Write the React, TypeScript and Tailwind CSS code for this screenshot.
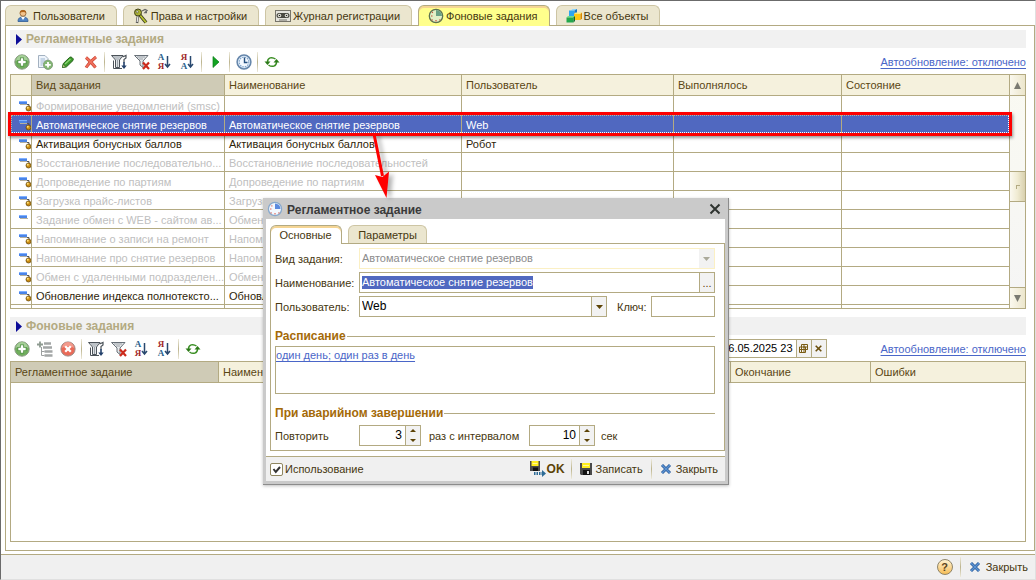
import type { ReactNode } from 'react';

type Job = { kind: string; name?: string; user?: string; on?: boolean; selected?: boolean; noDot?: boolean };

const jobs: Job[] = [
  { kind: 'Формирование уведомлений (smsc)' },
  { kind: 'Автоматическое снятие резервов', name: 'Автоматическое снятие резервов', user: 'Web', on: true, selected: true },
  { kind: 'Активация бонусных баллов', name: 'Активация бонусных баллов', user: 'Робот', on: true },
  { kind: 'Восстановление последовательно...', name: 'Восстановление последовательностей' },
  { kind: 'Допроведение по партиям', name: 'Допроведение по партиям' },
  { kind: 'Загрузка прайс-листов', name: 'Загрузка' },
  { kind: 'Задание обмен с WEB - сайтом ав...', name: 'Обмен', noDot: true },
  { kind: 'Напоминание о записи на ремонт', name: 'Напомин' },
  { kind: 'Напоминание про снятие резервов', name: 'Напомин' },
  { kind: 'Обмен с удаленными подразделен...', name: 'Обмен с' },
  { kind: 'Обновление индекса полнотексто...', name: 'Обновл', on: true },
];

/* ---------- icons ---------- */

function Svg({ size = 16, children }: { size?: number; children: ReactNode }) {
  return (
    <svg width={size} height={size} viewBox="0 0 16 16" className="shrink-0" aria-hidden="true">
      {children}
    </svg>
  );
}

const UserIcon = () => (
  <Svg>
    <path d="M3 13.500c0-3.500 2-4.500 5-4.500s5 1 5 4.500z" fill="#4f83c4" stroke="#2d5a94" strokeWidth=".8" />
    <path d="M6 9l2 3 2-3z" fill="#fff" />
    <circle cx="8" cy="5.300" r="3" fill="#f2c38c" stroke="#8a5a2a" strokeWidth=".8" />
    <path d="M4.800 4.800C4.500 1 11.500 1 11.200 4.800 9.500 3.800 7 3.800 4.800 4.800z" fill="#b0651c" />
  </Svg>
);

const KeysIcon = () => (
  <Svg>
    <path d="M6 6l7 8.500" stroke="#3c3c24" strokeWidth="3.500" />
    <path d="M6 6l7 8.500" stroke="#b9c42c" strokeWidth="1.800" />
    <path d="M5 7l-1 8" stroke="#555" strokeWidth="2.500" />
    <path d="M5 7l-.8 7" stroke="#e8e8e8" strokeWidth="1.200" />
    <path d="M9 3l3-1.500 2 1-2 2h2" fill="none" stroke="#666" strokeWidth="1.300" />
    <circle cx="5" cy="4.500" r="3.500" fill="#a9b034" stroke="#44441c" />
    <circle cx="4.200" cy="3.800" r="1.100" fill="#fff" stroke="#44441c" strokeWidth=".6" />
  </Svg>
);

const TapeIcon = () => (
  <Svg>
    <rect x=".5" y="2.500" width="15" height="11" fill="#e4e3dc" stroke="#77756a" />
    <rect x="1.500" y="5" width="13" height="5" rx="2.500" fill="#4a4a42" />
    <circle cx="4.500" cy="7.500" r="1.700" fill="#f4f4ea" />
    <circle cx="11.500" cy="7.500" r="1.700" fill="#f4f4ea" />
    <circle cx="4.500" cy="7.500" r=".8" fill="#222" />
    <circle cx="11.500" cy="7.500" r=".8" fill="#222" />
    <path d="M4 12h8" stroke="#77756a" />
  </Svg>
);

const GreenClockIcon = () => (
  <Svg>
    <circle cx="8" cy="8" r="6.700" fill="#e2f0c6" stroke="#5c7350" strokeWidth="1.300" />
    <path d="M8 8V2a6 6 0 0 1 6 6z" fill="#6aa184" />
    <path d="M3 8h1.500M8 12v1.500M11.500 11.500l.8.8M4 4l.8.8M4.500 11.500l-.8.8" stroke="#c2503a" strokeWidth="1.200" />
  </Svg>
);

const BlueClockIcon = () => (
  <Svg>
    <circle cx="8" cy="8" r="6.600" fill="#f3f8ff" stroke="#88a9cc" strokeWidth="1.300" />
    <path d="M8 8V2.500A5.500 5.500 0 0 1 13.500 8z" fill="#5c8ade" />
    <path d="M3 8h1.500M8 12v1.500M11.500 11.500l.8.8M4.500 11.500l-.8.8M4.500 4.500l.8.8" stroke="#e0685c" strokeWidth="1.200" />
  </Svg>
);

const CubesIcon = () => (
  <Svg>
    <path d="M5 2.500L6.500 1H11L9.500 2.500z" fill="#8fd6ff" />
    <path d="M3 2.500h5.500V8H3z" fill="#2da5ef" />
    <path d="M8.500 2.500L11 1v6L8.500 8z" fill="#1673c4" />
    <path d="M8 6L9.500 4.500H16L14.500 6z" fill="#ffe97a" />
    <path d="M8 6h6.500v6H8z" fill="#ffc814" />
    <path d="M14.500 6L16 4.500v6L14.500 12z" fill="#d98a00" />
    <path d="M.5 9.500L2 8h7L7.500 9.500z" fill="#6fe08a" />
    <path d="M.5 9.500h7V14.500h-7z" fill="#23a84c" />
    <path d="M7.500 9.500L9 8v5L7.500 14.500z" fill="#0d6c2e" />
  </Svg>
);

const AddIcon = () => (
  <Svg>
    <circle cx="8" cy="8" r="7.200" fill="#6fae5c" stroke="#8a9a84" />
    <path d="M2 7a6 6 0 0 1 12 0c-3-2-9-2-12 0z" fill="#a5cf98" />
    <path d="M8 3.500v9M3.500 8h9" stroke="#4f8f42" strokeWidth="4" />
    <path d="M8 4.300v7.400M4.300 8h7.400" stroke="#fff" strokeWidth="2.400" />
  </Svg>
);

const CopyIcon = () => (
  <Svg>
    <path d="M1.500 1.500h6.500l3 3v9H1.500z" fill="#eef4fb" stroke="#a3b1c0" />
    <path d="M3.500 5h4.500M3.500 7h5M3.500 9h3M3.500 11h2" stroke="#9eb6d0" />
    <circle cx="11" cy="10.800" r="4.600" fill="#82b872" stroke="#7d9a76" strokeWidth=".9" />
    <path d="M11 8v5.600M8.200 10.800h5.600" stroke="#fff" strokeWidth="1.800" />
  </Svg>
);

const PencilIcon = () => (
  <Svg>
    <path d="M2.500 13.500l.8-4L9.500 3.500c1-1.500 5 1 3.500 3L6.500 12.800z" fill="#3d9a2c" stroke="#24601a" />
    <path d="M5 10l5.500-5" stroke="#8fd878" strokeWidth="1.200" />
    <path d="M2.500 13.500l.7-3 2.300 2.300z" fill="#f3e3b2" stroke="#2b6b1e" strokeWidth=".7" />
  </Svg>
);

const DeleteIcon = () => (
  <Svg>
    <path d="M3 3.500C6 6 9.500 9.500 12.500 13.500M13 3C9 6 6 9 3 13.500" stroke="#c94434" strokeWidth="3" fill="none" />
    <path d="M3 3.500C6 6 9.500 9.500 12.500 13.500M13 3C9 6 6 9 3 13.500" stroke="#f0705c" strokeWidth="1.700" fill="none" />
  </Svg>
);

const FilterIcon = () => (
  <Svg>
    <path d="M.5 1.500H12L8.500 6v7.500h-4V6z" fill="#dfe3e6" stroke="#4b5259" />
    <path d="M2 3h8.500M4 5h4.500M6.500 6v7" stroke="#9aa1a8" />
    <path d="M2.500 6.500v8H11" fill="none" stroke="#4b5259" />
    <path d="M11.500 3l3.500-1.500V4l-2 1.500v3" fill="none" stroke="#4b5259" strokeWidth="1.200" />
    <path d="M13 8v5" stroke="#23406b" strokeWidth="1.600" />
    <path d="M10.300 11.500h5.400L13 15z" fill="#23406b" />
  </Svg>
);

const FilterOffIcon = () => (
  <Svg>
    <path d="M.5 1.500h13.500L9 7v6.500L6 11V7z" fill="#e6e9eb" stroke="#687078" />
    <path d="M3 3h8M5 5h4" stroke="#9aa1a8" />
    <path d="M9 8.500l6 6.500M15 8.500L9 15" stroke="#cc2a1c" strokeWidth="2.200" />
  </Svg>
);

function SortIcon({ desc }: { desc?: boolean }) {
  return (
    <span className="flex items-center" aria-hidden="true">
      <span className="flex flex-col font-['Liberation_Serif',serif] text-[9px] leading-[9px] font-bold">
        <span className={desc ? 'text-[#a02828]' : 'text-[#2b5f8c]'}>{desc ? 'Я' : 'А'}</span>
        <span className={desc ? 'text-[#2b5f8c]' : 'text-[#a02828]'}>{desc ? 'А' : 'Я'}</span>
      </span>
      <svg width="7" height="14" viewBox="0 0 7 14">
        <path d="M3.500 1v11M1 9l2.500 3L6 9" fill="none" stroke="#28486f" strokeWidth="1.500" />
      </svg>
    </span>
  );
}

const PlayIcon = () => (
  <Svg>
    <path d="M5 2.500v11l6-5.500z" fill="#12a422" stroke="#0a7d18" strokeWidth=".7" />
  </Svg>
);

const ScheduleIcon = () => (
  <Svg>
    <circle cx="8" cy="8" r="6.900" fill="#dbe9f7" stroke="#6485aa" strokeWidth="1.500" />
    <circle cx="8" cy="8" r="4.800" fill="#f4f9ff" stroke="#7fa2c8" strokeWidth="1.100" strokeDasharray="1.500 1.010" />
    <path d="M8.500 3.500V8.500h3" fill="none" stroke="#25507f" strokeWidth="1.400" />
  </Svg>
);

const RefreshIcon = () => (
  <Svg>
    <path d="M3.500 8C3.500 3.500 8 2.500 11.500 5M12.500 8c0 4.500-4.500 5.500-8 3" fill="none" stroke="#3b8f25" strokeWidth="1.500" />
    <path d="M.5 7.500h6l-3 3.500z" fill="#2c7a18" />
    <path d="M9.500 8.500h6l-3-3.500z" fill="#2c7a18" />
  </Svg>
);

const TreeAddIcon = () => (
  <Svg>
    <path d="M0 3.500h6M3 .5v6" stroke="#8d9a90" strokeWidth="1.800" />
    <path d="M7 2.500h7M6 6.500h9M7.500 10.500h8M7.500 14.500h8" stroke="#a3a6a6" strokeWidth="2.400" />
    <path d="M4.500 6v8.500h3M4.500 10.500h3" fill="none" stroke="#9b9f9f" />
  </Svg>
);

const CancelIcon = () => (
  <Svg>
    <circle cx="8" cy="8" r="7.100" fill="#ea6a58" stroke="#9d8a86" />
    <path d="M2 7a6 6 0 0 1 12 0c-3-2-9-2-12 0z" fill="#f39a8c" />
    <path d="M5.200 5.200l5.600 5.600M10.800 5.200l-5.600 5.600" stroke="#fff" strokeWidth="2.300" />
  </Svg>
);

const JobIcon = ({ noDot }: { noDot?: boolean }) => (
  <svg width="13" height="12" viewBox="0 0 13 12" className="block" aria-hidden="true">
    <path d="M1 4.500h8" stroke="#b5b0a0" />
    <rect x="0" y="1" width="8" height="3" fill="#4a84e8" />
    <path d="M0 1.500h8" stroke="#7fb0ff" />
    {!noDot && (
      <>
        <path d="M8 4.500h2V6" fill="none" stroke="#555" />
        <circle cx="9.500" cy="8.500" r="2.500" fill="#c98a10" stroke="#5e4208" strokeWidth=".7" />
        <circle cx="8.800" cy="7.800" r="1" fill="#ffe27a" />
      </>
    )}
  </svg>
);

const BlueCross = () => (
  <svg width="12" height="12" viewBox="0 0 12 12" className="shrink-0" aria-hidden="true">
    <path d="M2 2l8 8M10 2l-8 8" stroke="#2c5c9a" strokeWidth="3" />
    <path d="M2 2l8 8M10 2l-8 8" stroke="#5b94d4" strokeWidth="1.400" />
  </svg>
);

const Floppy = () => (
  <svg width="12" height="12" viewBox="0 0 12 12" className="shrink-0" aria-hidden="true">
    <path d="M0 0h12v12H1l-1-1z" fill="#4a4a4a" />
    <rect x="2" y="0" width="8" height="5" fill="#ffee1c" />
    <path d="M3 2.500h6" stroke="#fff7a0" />
    <rect x="3" y="7" width="7" height="5" fill="#111" />
    <rect x="7" y="8" width="2" height="3" fill="#ddd" />
  </svg>
);

const FloppyArrow = () => (
  <svg width="16" height="16" viewBox="0 0 16 16" className="shrink-0" aria-hidden="true">
    <path d="M0 0h10v10H0z" fill="#4a4a4a" />
    <rect x="1.500" y="0" width="7" height="5" fill="#ffee1c" />
    <path d="M2.500 2.500h5" stroke="#fff7a0" />
    <rect x="3" y="6.500" width="5" height="3.500" fill="#111" />
    <path d="M4 12.500h8" stroke="#2d6b96" strokeWidth="3" strokeDasharray="1.500 1" />
    <path d="M12 9l4 3.500-4 3.500z" fill="#2d6b96" />
  </svg>
);

const Triangle = ({ up, className }: { up?: boolean; className: string }) => (
  <svg width="7" height="4" viewBox="0 0 7 4" preserveAspectRatio="none" className={className} aria-hidden="true">
    <path d={up ? 'M0 4h7L3.500 0z' : 'M0 0h7L3.500 4z'} fill="currentColor" />
  </svg>
);

/* ---------- small pieces ---------- */

function Tab({ icon, label, active }: { icon: ReactNode; label: string; active?: boolean }) {
  return (
    <button
      type="button"
      role="tab"
      aria-selected={!!active}
      className={
        active
          ? 'relative -mb-px flex h-[21px] items-center gap-[2px] rounded-t-md border border-b-0 border-[#b3aa82] bg-[#ffff8c] pr-[11px] pl-[9px] shadow-[inset_0_2px_0_#f5d594]'
          : 'flex h-5 items-center gap-[2px] rounded-t-md border border-b-0 border-[#cdc5a4] bg-[#ebe6cf] pr-[11px] pl-[9px]'
      }
    >
      {icon}
      {label}
    </button>
  );
}

function ToolButton({ label, children }: { label: string; children: ReactNode }) {
  return (
    <button type="button" aria-label={label} className="flex h-[23px] w-[23px] items-center justify-center">
      {children}
    </button>
  );
}

const Separator = () => (
  <span className="mx-[2px] h-5 w-px bg-linear-to-b from-[#eeeadb] via-[#bcb48e] to-[#eeeadb]" />
);

function SectionTitle({ children }: { children: ReactNode }) {
  return (
    <h2 className="flex h-[18px] items-center gap-1 bg-[#f1f1f1] pl-[6px] text-[12px] font-bold text-[#b3aa82]">
      <svg width="6" height="11" viewBox="0 0 6 11" aria-hidden="true">
        <path d="M0 0v11l6-5.500z" fill="#0c0c98" />
      </svg>
      {children}
    </h2>
  );
}

function GroupTitle({ children }: { children: ReactNode }) {
  return (
    <h3 className="mt-[11px] flex h-4 items-center gap-px text-[12px] font-bold text-[#a46a08]">
      {children}
      <span className="h-px flex-1 bg-[#b3aa82]" />
    </h3>
  );
}

const AutoRefreshLink = () => (
  <a href="#" className="whitespace-nowrap text-[#4a66c8] underline underline-offset-2">
    Автообновление: отключено
  </a>
);

const FilterTools = () => (
  <>
    <ToolButton label="Отбор"><FilterIcon /></ToolButton>
    <ToolButton label="Отключить отбор"><FilterOffIcon /></ToolButton>
    <ToolButton label="По возрастанию"><SortIcon /></ToolButton>
    <ToolButton label="По убыванию"><SortIcon desc /></ToolButton>
  </>
);

const th = 'h-[21px] truncate border-r border-b border-[#b3aa82] px-1 text-left font-normal text-[#5a4613]';
const td = 'h-[19px] overflow-hidden border-r border-b border-[#b3aa82] px-1 pt-[2px] whitespace-nowrap';

function Spinner({ label, value, className }: { label: string; value: string; className: string }) {
  return (
    <span className={`flex h-[21px] border border-[#b3aa82] bg-white ${className}`}>
      <input aria-label={label} defaultValue={value} className="min-w-0 flex-1 pr-[3px] pb-px text-right text-[12px] text-black outline-none" />
      <span className="flex w-[15px] flex-col border-l border-[#b3aa82] bg-[#f2f2f2] text-[#5c4306]">
        <button type="button" aria-label="Больше" className="flex flex-1 items-center justify-center"><Triangle up className="h-[3px] w-[6px]" /></button>
        <button type="button" aria-label="Меньше" className="flex flex-1 items-center justify-center"><Triangle className="h-[3px] w-[6px]" /></button>
      </span>
    </span>
  );
}

/* ---------- dialog ---------- */

function JobDialog() {
  return (
    <div
      role="dialog"
      aria-labelledby="dialog-title"
      className="absolute top-[197px] left-[262px] w-[466px] border-r border-b border-[#8c8c8c] bg-[#cacaca] pr-[3px] pb-[3px] pl-[3px] shadow-[0_1px_3px_rgba(0,0,0,0.25)]"
    >
      <div className="flex h-[21px] items-center gap-1 pr-[2px] pl-px">
        <BlueClockIcon />
        <h2 id="dialog-title" className="flex-1 pt-[2px] text-[12px] font-bold text-[#3a3a3a]">Регламентное задание</h2>
        <button type="button" aria-label="Закрыть окно" className="flex h-4 w-4 items-center justify-center pt-px">
          <svg width="12" height="12" viewBox="0 0 12 12"><path d="M1.500 1.500l9 9M10.500 1.500l-9 9" stroke="#2f3430" strokeWidth="2" /></svg>
        </button>
      </div>

      <div className="bg-white pt-[6px] pl-1">
        <div role="tablist" className="flex gap-[6px]">
          <button type="button" role="tab" aria-selected="true" className="relative -mb-px h-[19px] w-[72px] rounded-t-md border border-b-0 border-[#b3aa82] bg-white pr-px shadow-[inset_0_2px_0_#f5d594]">
            Основные
          </button>
          <button type="button" role="tab" aria-selected="false" className="h-[18px] w-[79px] rounded-t-md border border-b-0 border-[#cdc5a4] bg-[#ebe6cf]">
            Параметры
          </button>
        </div>

        <div className="border border-[#b3aa82] pt-1 pr-[9px] pb-1 pl-1">
          <div className="flex flex-col gap-[3px]">
            <div className="flex items-center">
              <label htmlFor="kind" className="w-[84px]">Вид задания:</label>
              <span className="flex h-[21px] flex-1 border border-[#fbf0c4]">
                <input id="kind" disabled defaultValue="Автоматическое снятие резервов" className="min-w-0 flex-1 px-[2px] pb-px text-[#8c8c8c]" />
                <span className="flex w-[15px] items-center justify-center bg-[#f2f2f2] text-[#aaa99a]"><Triangle className="" /></span>
              </span>
            </div>
            <div className="flex items-center">
              <label htmlFor="name" className="w-[84px]">Наименование:</label>
              <span className="flex h-[21px] flex-1 border border-[#b3aa82]">
                <span className="flex flex-1 items-center pb-px pl-[2px]">
                  <input id="name" defaultValue="Автоматическое снятие резервов" className="field-sizing-content h-[13px] bg-[#5068c0] text-white outline-none" />
                </span>
                <button type="button" aria-label="Выбрать" className="w-[15px] border-l border-[#b3aa82] bg-[#f2f2f2] text-[#5c4306]">...</button>
              </span>
            </div>
            <div className="flex items-center">
              <label htmlFor="user" className="w-[84px]">Пользователь:</label>
              <span className="flex h-[21px] flex-1 border border-[#b3aa82]">
                <select id="user" className="min-w-0 flex-1 appearance-none px-[2px] pb-px text-[12px] text-black outline-none">
                  <option>Web</option>
                </select>
                <span className="flex w-[15px] items-center justify-center border-l border-[#b3aa82] bg-[#f2f2f2] text-[#5c4306]"><Triangle className="" /></span>
              </span>
              <label htmlFor="key" className="w-11 pl-[10px]">Ключ:</label>
              <input id="key" className="h-[21px] w-16 border border-[#b3aa82] px-[2px] outline-none" />
            </div>
          </div>

          <GroupTitle>Расписание</GroupTitle>
          <div className="mt-[2px] h-12 border border-[#b3aa82] pt-px">
            <a href="#" className="text-[#4a66c8] underline underline-offset-2">один день; один раз в день</a>
          </div>

          <GroupTitle>При аварийном завершении</GroupTitle>
          <div className="mt-1 flex items-center">
            <span className="w-[84px]">Повторить</span>
            <Spinner label="Повторить, раз" value="3" className="w-[62px]" />
            <span className="w-[108px] pl-2 whitespace-nowrap">раз с интервалом</span>
            <Spinner label="Интервал, сек" value="10" className="w-[66px]" />
            <span className="pl-[6px]">сек</span>
          </div>
        </div>
      </div>

      <div className="bg-white pt-[5px]">
        <div className="flex h-[25px] items-center border-t border-[#b3aa82] bg-[#f0f0f0] pr-[7px] pl-1">
          <label className="flex flex-1 items-center gap-[2px]">
            <span className="relative flex h-[13px] w-[13px]">
              <input type="checkbox" defaultChecked className="h-[13px] w-[13px] appearance-none rounded-xs border border-[#8f8660] bg-white" />
              <svg width="13" height="13" viewBox="0 0 13 13" className="pointer-events-none absolute inset-0" aria-hidden="true">
                <path d="M3.500 6l2.300 3L10 4" fill="none" stroke="#333" strokeWidth="2" />
              </svg>
            </span>
            Использование
          </label>
          <button type="button" className="flex items-center gap-px pr-1 text-[12px] font-bold text-[#5c4306]"><FloppyArrow />OK</button>
          <Separator />
          <button type="button" className="flex items-center gap-1 px-[6px]"><Floppy />Записать</button>
          <Separator />
          <button type="button" className="flex items-center gap-1 pl-[6px]"><BlueCross />Закрыть</button>
        </div>
      </div>
    </div>
  );
}

/* ---------- page ---------- */

export default function App() {
  return (
    <div className="relative flex min-h-screen flex-col border-t border-r border-b border-l border-t-[#6b6b6b] border-r-[#e0e0e0] border-b-[#e0e0e0] border-l-[#6b6b6b] bg-white pt-1 font-['Liberation_Sans',Arial,sans-serif] text-[11px] leading-[14px] text-[#46370f]">
      <div role="tablist" className="ml-1 flex gap-[6px]">
        <Tab icon={<UserIcon />} label="Пользователи" />
        <Tab icon={<KeysIcon />} label="Права и настройки" />
        <Tab icon={<TapeIcon />} label="Журнал регистрации" />
        <Tab icon={<GreenClockIcon />} label="Фоновые задания" active />
        <Tab icon={<CubesIcon />} label="Все объекты" />
      </div>

      <main className="mb-[3px] ml-1 flex flex-1 flex-col border border-[#b3aa82] pt-1 pr-2 pb-2 pl-1">
        <SectionTitle>Регламентные задания</SectionTitle>
        <div className="flex h-[26px] items-center pt-[2px]">
          <ToolButton label="Добавить"><AddIcon /></ToolButton>
          <ToolButton label="Скопировать"><CopyIcon /></ToolButton>
          <ToolButton label="Изменить"><PencilIcon /></ToolButton>
          <ToolButton label="Удалить"><DeleteIcon /></ToolButton>
          <Separator />
          <FilterTools />
          <Separator />
          <ToolButton label="Выполнить"><PlayIcon /></ToolButton>
          <Separator />
          <ToolButton label="Расписание"><ScheduleIcon /></ToolButton>
          <Separator />
          <ToolButton label="Обновить"><RefreshIcon /></ToolButton>
          <span className="flex-1" />
          <AutoRefreshLink />
        </div>

        <div className="relative">
          <div className="flex h-[235px] overflow-hidden border border-[#b3aa82]">
            <div className="min-w-0 flex-1 overflow-hidden">
              <table className="w-full table-fixed border-separate border-spacing-0">
                <colgroup>
                  <col className="w-[21px]" />
                  <col className="w-[193px]" />
                  <col className="w-[237px]" />
                  <col className="w-[212px]" />
                  <col className="w-[168px]" />
                  <col />
                </colgroup>
                <thead>
                  <tr className="bg-[#f5f1dd]">
                    <th className={th} />
                    <th className={`${th} bg-[#cfcbb6]`}>Вид задания</th>
                    <th className={th}>Наименование</th>
                    <th className={th}>Пользователь</th>
                    <th className={th}>Выполнялось</th>
                    <th className={`${th} border-r-0`}>Состояние</th>
                  </tr>
                </thead>
                <tbody>
                  {jobs.map((job) => (
                    <tr key={job.kind} className={job.selected ? 'bg-[#5068c0] text-white' : job.on ? 'text-[#2e2408]' : 'text-[#c0c0c0]'}>
                      <td className={`${td} pr-0 pl-2`}><JobIcon noDot={job.noDot} /></td>
                      <td className={td}>{job.kind}</td>
                      <td className={td}>{job.name}</td>
                      <td className={td}>{job.user}</td>
                      <td className={td} />
                      <td className={`${td} border-r-0`} />
                    </tr>
                  ))}
                  <tr>
                    <td className={td} />
                    <td className={td} />
                    <td className={td} />
                    <td className={td} />
                    <td className={td} />
                    <td className={`${td} border-r-0`} />
                  </tr>
                </tbody>
              </table>
            </div>
            <div className="flex w-4 flex-col border-l border-[#b3aa82] bg-linear-to-b from-[#fafaf2] to-[#f5f5f5] text-[#7a7a72]">
              <button type="button" aria-label="Вверх" className="flex h-[21px] items-center justify-center border-b border-[#b3aa82] bg-linear-to-r from-[#faf8ee] to-[#ece6cc]">
                <Triangle up className="h-[7px]" />
              </button>
              <div className="flex-1 pt-[75px]">
                <div className="flex h-[31px] items-center justify-center border-y border-[#b3aa82] bg-linear-to-r from-[#fbf9f0] via-[#f0ebd2] to-[#d8d0ae]">
                  <span className="h-1 w-1 border-t border-l border-[#b3aa82]" />
                </div>
              </div>
              <button type="button" aria-label="Вниз" className="flex h-[21px] items-center justify-center border-t border-[#b3aa82] bg-linear-to-r from-[#faf8ee] to-[#ece6cc]">
                <Triangle className="h-[7px]" />
              </button>
            </div>
          </div>

          {/* highlighted row frame */}
          <div className="pointer-events-none absolute top-[38px] right-[14px] -left-[2px] h-6 border-[3px] border-[#fe0000] shadow-[1px_2px_3px_rgba(0,0,0,0.4)]">
            <div className="h-full border border-dotted border-t-[#b8b49c] border-r-white border-b-white border-l-[#b8b49c]" />
          </div>
        </div>

        <div className="mt-2">
          <SectionTitle>Фоновые задания</SectionTitle>
        </div>
        <div className="flex h-[26px] items-center pt-[2px]">
          <ToolButton label="Добавить"><AddIcon /></ToolButton>
          <ToolButton label="Добавить группу"><TreeAddIcon /></ToolButton>
          <ToolButton label="Отменить"><CancelIcon /></ToolButton>
          <Separator />
          <FilterTools />
          <Separator />
          <ToolButton label="Обновить"><RefreshIcon /></ToolButton>
          <span className="flex-1" />
          <span className="mr-[54px] mb-[2px] flex h-[19px] border border-[#b3aa82]">
            <input aria-label="Дата" defaultValue="06.05.2025 23" className="w-24 pr-[3px] text-right text-black outline-none" />
            <button type="button" aria-label="Выбрать дату" className="flex w-[15px] items-center justify-center border-l border-[#b3aa82] bg-[#f2f2f2]">
              <svg width="9" height="9" viewBox="0 0 9 9"><path d="M2.500.5h6v5h-2M.5 3h6v5.500h-6zM2.500.5V3M5 .5v8M2.500 3v5.500M.5 5.500h8M4 3h4.500" fill="none" stroke="#7a5c14" /></svg>
            </button>
            <button type="button" aria-label="Очистить" className="flex w-[15px] items-center justify-center border-l border-[#b3aa82] bg-[#f2f2f2]">
              <svg width="7" height="7" viewBox="0 0 7 7"><path d="M.7.7l5.600 5.600M6.300.7L.7 6.300" stroke="#6b4f0e" strokeWidth="1.600" /></svg>
            </button>
          </span>
          <AutoRefreshLink />
        </div>

        <div className="flex-1 border border-[#b3aa82]">
          <table className="w-full table-fixed border-separate border-spacing-0">
            <colgroup>
              <col className="w-[208px]" />
              <col className="w-[512px]" />
              <col className="w-[140px]" />
              <col />
            </colgroup>
            <thead>
              <tr className="bg-[#f5f1dd]">
                <th className={`${th} bg-[#cfcbb6]`}>Регламентное задание</th>
                <th className={th}>Наименование</th>
                <th className={th}>Окончание</th>
                <th className={`${th} border-r-0`}>Ошибки</th>
              </tr>
            </thead>
          </table>
        </div>
      </main>

      <footer className="flex h-[25px] items-center justify-end border-t border-[#b3aa82] bg-[#f0f0f0] pr-[7px]">
        <button type="button" aria-label="Справка" className="mr-[5px] flex h-4 w-4 items-center justify-center rounded-full border border-[#8f8468] bg-linear-to-b from-[#fff3cf] to-[#f5bd55] text-[11px] font-bold text-[#5a4420]">
          ?
        </button>
        <Separator />
        <button type="button" className="flex items-center gap-[5px] pl-[6px]"><BlueCross />Закрыть</button>
      </footer>

      <JobDialog />

      {/* pointer from the row to the dialog */}
      <svg width="34" height="70" viewBox="0 0 34 70" className="pointer-events-none absolute top-[132px] left-[363px] drop-shadow-[4px_2px_2px_rgba(0,0,0,0.3)]" aria-hidden="true">
        <path d="M10 1L18.500 43" stroke="#fe0000" strokeWidth="3" />
        <path d="M11 42L18.500 44 25 38.500 22.500 65z" fill="#fe0000" />
      </svg>
    </div>
  );
}
